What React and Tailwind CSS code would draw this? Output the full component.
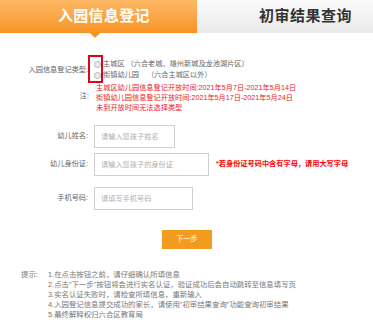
import React from 'react';

const font = { fontFamily: '"Liberation Sans", "Noto Sans CJK SC", sans-serif' };

const Radio = ({ children }) => (
  <label className="flex items-center h-[11px]">
    <span className="w-[7px] h-[7px] rounded-full border border-[#b5b5b5] bg-[#ececec] shrink-0" />
    <span className="ml-[2px] whitespace-pre">{children}</span>
  </label>
);

const Field = ({ label, width, placeholder, className = '', extra }) => (
  <div className={`flex items-center ${className}`}>
    <div className="w-[89px] text-right pr-[1px]">{label}</div>
    <input
      className={`ml-[5px] ${width} h-[23px] border border-[#cfcfcf] px-[6px] text-[7.2px] outline-none placeholder:text-[#b0b0b0]`}
      placeholder={placeholder}
      style={font}
    />
    {extra}
  </div>
);

export default function App() {
  return (
    <div className="w-[373px] h-[325px] bg-white overflow-hidden relative text-[7.2px] text-[#666]" style={font}>
      {/* tabs */}
      <div className="flex h-[33px]">
        <div className="relative w-[197px] bg-gradient-to-b from-[#fdb864] to-[#f7941f] flex items-center pl-[58px]">
          <span className="text-white text-[15px] font-bold tracking-[0.3px]">入园信息登记</span>
          <span className="absolute left-[90px] top-[33px] w-0 h-0 border-l-[5px] border-r-[5px] border-t-[5px] border-l-transparent border-r-transparent border-t-[#f7941f]" />
        </div>
        <div className="flex-1 bg-gradient-to-b from-[#fbfbfb] to-[#e9e9e9] flex items-center pl-[62px]">
          <span className="text-[#333] text-[15px] font-bold tracking-[0.5px]">初审结果查询</span>
        </div>
      </div>

      {/* type */}
      <div className="flex items-center mt-[26px]">
        <div className="w-[88px] text-right">入园信息登记类型:</div>
        <div className="ml-[6px] flex flex-col">
          <Radio>{'主城区 （六合老城、雄州新城及龙池湖片区）'}</Radio>
          <Radio>{'街镇幼儿园    （六合主城区以外）'}</Radio>
        </div>
      </div>

      {/* note */}
      <div className="flex items-center mt-[2px]">
        <div className="w-[89px] text-right -mt-[4px]">注:</div>
        <div className="ml-[7px] text-[#e8222a] leading-[10px]">
          <div>主城区幼儿园信息登记开放时间:2021年5月7日-2021年5月14日</div>
          <div>街镇幼儿园信息登记开放时间:2021年5月17日-2021年5月24日</div>
          <div>未到开放时间无法选择类型</div>
        </div>
      </div>

      <Field label="幼儿姓名:" width="w-[81px]" placeholder="请输入您孩子姓名" className="mt-[12px]" />
      <Field
        label="幼儿身份证:"
        width="w-[115px] h-[22px]"
        placeholder="请输入您孩子的身份证"
        className="mt-[5px]"
        extra={<span className="ml-[7px] text-[#f00] font-bold">*若身份证号码中含有字母，请用大写字母</span>}
      />
      <Field label="手机号码:" width="w-[99px]" placeholder="请填写手机号码" className="mt-[11px]" />

      <div className="mt-[20px] pl-[162px]">
        <button className="w-[50px] h-[19px] bg-[#f39a21] text-white text-[7.2px]" style={font}>下一步</button>
      </div>

      {/* tips */}
      <div className="flex mt-[21px] pl-[21px] leading-[10px] text-[7.4px] text-[#777]">
        <div className="w-[27px]">提示:</div>
        <div>
          <div>1.在点击按钮之前，请仔细确认所填信息</div>
          <div>2.点击"下一步"按钮将会进行实名认证，验证成功后会自动跳转至信息填写页</div>
          <div>3.实名认证失败时，请检查所填信息，重新输入</div>
          <div>4.入园登记信息提交成功的家长，请使用"初审结果查询"功能查询初审结果</div>
          <div>5.最终解释权归六合区教育局</div>
        </div>
      </div>

      {/* annotation box */}
      <div className="absolute left-[88px] top-[55px] w-[15px] h-[28px] border-2 border-[#e3001b]" />
    </div>
  );
}
